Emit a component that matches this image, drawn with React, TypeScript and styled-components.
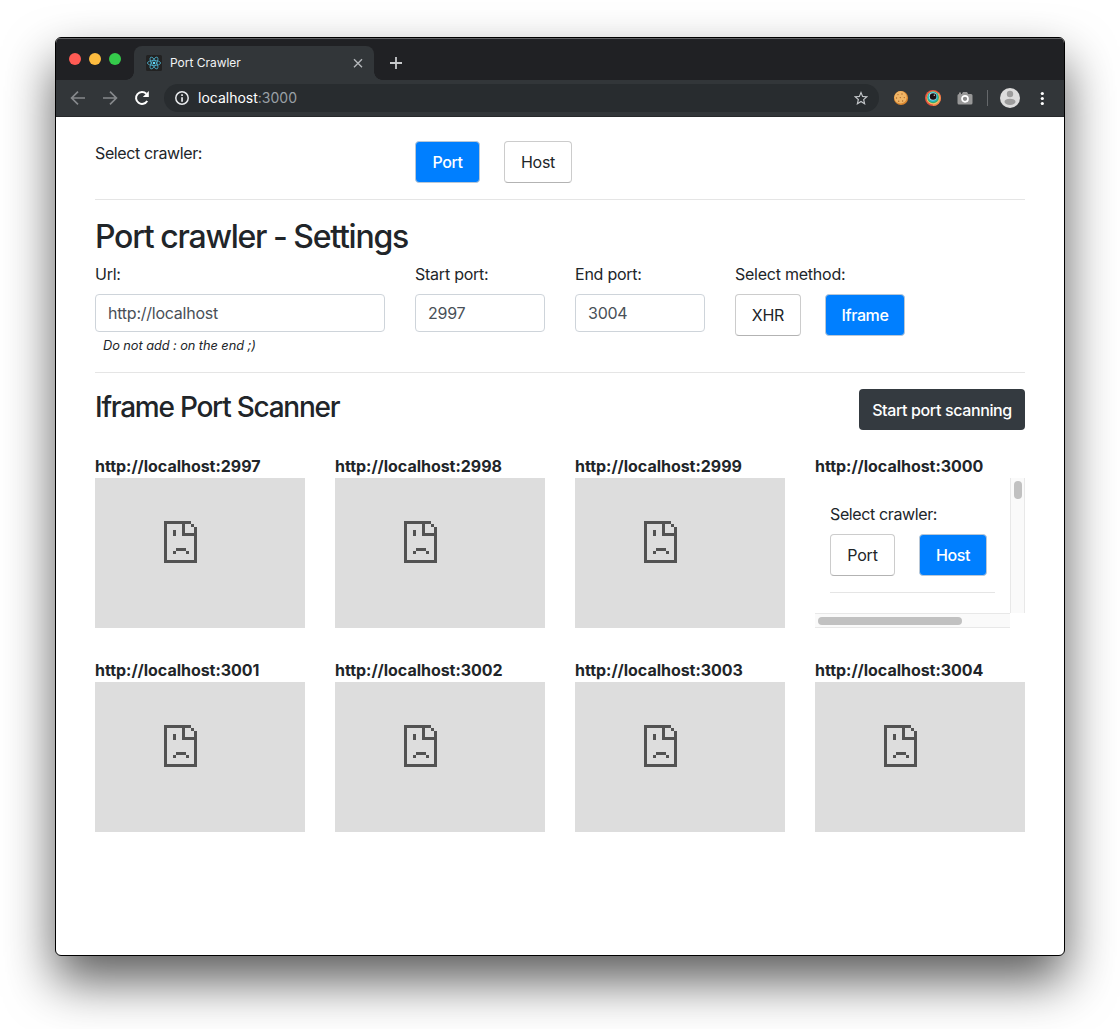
import React from 'react';
import styled, { createGlobalStyle, css } from 'styled-components';

const GlobalStyle = createGlobalStyle`
  *, *::before, *::after { box-sizing: border-box; }
  body {
    margin: 0;
    background: #fff;
    color: #212529;
    font: 400 16px/24px Inter, "Liberation Sans", sans-serif;
    letter-spacing: -0.24px;
  }
`;

const Desktop = styled.div`
  height: 1029px;
  padding: 37px 55px 73px;
  overflow: hidden;
`;

const Window = styled.div`
  display: flex;
  flex-direction: column;
  width: 1010px;
  height: 919px;
  border: 1px solid #000;
  border-radius: 6px;
  background: #fff;
  box-shadow: 0 25px 50px rgba(0, 0, 0, 0.64);
  overflow: hidden;
`;

const TabStrip = styled.div`
  display: flex;
  height: 42px;
  flex: none;
  background: #202124;
  border-top: 1px solid #626365;
`;

const Lights = styled.div`
  display: flex;
  gap: 8px;
  padding: 14px 13px 0;
  width: 78px;
`;

const Light = styled.span<{ $color: string }>`
  width: 12px;
  height: 12px;
  border-radius: 50%;
  background: ${(p) => p.$color};
`;

const Tab = styled.div`
  position: relative;
  display: flex;
  align-items: center;
  width: 240px;
  height: 34px;
  margin-top: 7px;
  padding: 0 10px 0 12px;
  border-radius: 8px 8px 0 0;
  background: #323639;
  color: #f1f3f4;
  font-size: 12px;
  line-height: 16px;
  letter-spacing: -0.02px;

  &::before, &::after {
    content: '';
    position: absolute;
    bottom: 0;
    width: 8px;
    height: 8px;
  }
  &::before {
    left: -8px;
    background: radial-gradient(circle at 0 0, transparent 7.5px, #323639 8px);
  }
  &::after {
    right: -8px;
    background: radial-gradient(circle at 100% 0, transparent 7.5px, #323639 8px);
  }
`;

const TabTitle = styled.span`
  flex: 1;
  padding-left: 8px;
`;

const NewTab = styled.div`
  display: flex;
  align-items: center;
  padding: 7px 0 0 15px;
`;

const Toolbar = styled.div`
  display: flex;
  align-items: center;
  height: 37px;
  flex: none;
  padding: 0 14px 0 12px;
  background: #323639;
  border-bottom: 1px solid #27292b;
`;

const NavButtons = styled.div`
  display: flex;
  gap: 12px;
  width: 96px;
`;

const Omnibox = styled.div`
  display: flex;
  align-items: center;
  width: 715px;
  height: 28px;
  padding: 0 10px;
  border-radius: 14px;
  background: #282c2f;
  color: #9aa0a6;
  font-size: 14px;
  letter-spacing: 0;
`;

const Address = styled.span`
  flex: 1;
  padding-left: 8px;
  b { font-weight: 400; color: #fff; }
`;

const Extensions = styled.div`
  display: flex;
  align-items: center;
  gap: 16px;
  padding-left: 14px;
`;

const Divider = styled.span`
  width: 1px;
  height: 16px;
  margin: 0 12px 0 14px;
  background: #65686b;
`;

const Menu = styled.div`
  display: flex;
  padding-left: 14px;
`;

const Page = styled.main`
  flex: 1;
  padding: 24px 39px 0;
`;

const Section = styled.section<{ $height: number }>`
  display: flex;
  height: ${(p) => p.$height}px;
`;

const Column = styled.div<{ $span: number }>`
  flex: none;
  width: ${(p) => p.$span * 80}px;
  padding-right: 30px;
  white-space: nowrap;
`;

const Rule = styled.hr`
  margin: 0;
  border: 0;
  border-top: 1px solid #e5e5e5;
`;

const Heading = styled.h2`
  margin: 18px 0 6px;
  font-size: 32px;
  font-weight: 500;
  line-height: 38px;
  letter-spacing: -1.25px;
  word-spacing: -0.5px;
`;

const Subheading = styled.h3`
  margin: 1px 0 0;
  font-size: 28px;
  font-weight: 500;
  line-height: 34px;
  letter-spacing: -1.25px;
`;

const Label = styled.label`
  display: block;
  height: 32px;
`;

const CrawlerLabel = styled.div`
  height: 32px;
  letter-spacing: -0.38px;
`;

const Input = styled.input`
  display: block;
  width: 100%;
  height: 38px;
  padding: 0 12px;
  border: 1px solid #ced4da;
  border-radius: 4px;
  background: #fff;
  color: #495057;
  font: inherit;
  letter-spacing: inherit;
`;

const Hint = styled.small`
  display: block;
  padding: 4px 8px;
  font-size: 12.8px;
  font-style: italic;
  line-height: 20px;
  letter-spacing: -0.06px;
`;

const ButtonGroup = styled.div`
  display: flex;
  gap: 24px;
`;

const Toggle = styled.button<{ $width: number; $active?: boolean }>`
  width: ${(p) => p.$width}px;
  height: 42px;
  padding: 0;
  border: 1px solid #ccc;
  border-bottom-color: #b3b3b3;
  border-radius: 4px;
  background: #fff;
  color: #212529;
  font: inherit;
  letter-spacing: inherit;
  ${(p) => p.$active && css`
    border-color: #b9c7d6;
    background: #007fff;
    color: #fff;
    font-weight: 500;
    letter-spacing: -0.4px;
  `}
`;

const ScannerHead = styled.div`
  display: flex;
  justify-content: space-between;
  height: 65px;
`;

const ScanButton = styled.button`
  width: 166px;
  height: 41px;
  padding: 0;
  border: 0;
  border-radius: 4px;
  background: #343a40;
  color: #fff;
  font: inherit;
  font-weight: 500;
  letter-spacing: -0.37px;
`;

const Grid = styled.div`
  display: grid;
  grid-template-columns: repeat(4, 210px);
  gap: 30px;
`;

const Target = styled.h4`
  margin: 0;
  font-size: 16px;
  font-weight: 700;
  line-height: 24px;
  letter-spacing: -0.03px;
`;

const DeadFrame = styled.div`
  height: 150px;
  padding: 43px 0 0 69px;
  background: #ddd;
  svg { display: block; }
`;

const LiveFrame = styled.div`
  display: grid;
  grid-template: 135px 15px / 195px 15px;
  height: 150px;
`;

const FrameBody = styled.div`
  padding: 24px 15px 0;
`;

const FrameRule = styled(Rule)`
  margin-top: 16px;
`;

const VerticalTrack = styled.div`
  padding: 3px 2px 0 3px;
  border: solid #e8e8e8;
  border-width: 0 1px;
  background: #fafafa;
`;

const HorizontalTrack = styled.div`
  padding: 3px 0 0 3px;
  border: solid #e8e8e8;
  border-width: 1px 0;
  background: #fafafa;
`;

const Thumb = styled.div<{ $w: number; $h: number }>`
  width: ${(p) => p.$w}px;
  height: ${(p) => p.$h}px;
  border-radius: 4px;
  background: #c1c1c1;
`;

const ReactMark = () => (
  <svg width="16" height="16" viewBox="0 0 16 16">
    <rect width="16" height="16" rx="1.5" fill="#222" />
    <g fill="none" stroke="#4fb3cf" strokeWidth="0.8">
      <ellipse cx="8" cy="8" rx="6.6" ry="2.5" />
      <ellipse cx="8" cy="8" rx="6.6" ry="2.5" transform="rotate(60 8 8)" />
      <ellipse cx="8" cy="8" rx="6.6" ry="2.5" transform="rotate(120 8 8)" />
    </g>
    <circle cx="8" cy="8" r="1.3" fill="#61dafb" />
  </svg>
);

const CloseIcon = () => (
  <svg width="12" height="12" viewBox="0 0 12 12" stroke="#b4b7ba" strokeWidth="1.4">
    <path d="M2 2.2l8 8M10 2.2l-8 8" />
  </svg>
);

const PlusIcon = () => (
  <svg width="14" height="14" viewBox="0 0 14 14" stroke="#c8cacc" strokeWidth="1.8">
    <path d="M7 1v12M1 7h12" />
  </svg>
);

const ArrowIcon = ({ forward }: { forward?: boolean }) => (
  <svg width="20" height="20" viewBox="0 0 20 20" fill="none" stroke="#85888b" strokeWidth="1.7">
    <path d={forward ? 'M3 10h13M10 3.6l6.4 6.4-6.4 6.4' : 'M17 10H4M10 3.6L3.6 10l6.4 6.4'} />
  </svg>
);

const ReloadIcon = () => (
  <svg width="20" height="20" viewBox="0 0 20 20">
    <path d="M15.2 13a6 6 0 1 1-.9-7.3" fill="none" stroke="#fff" strokeWidth="2" />
    <path d="M16.8 3v6h-6z" fill="#fff" />
  </svg>
);

const InfoIcon = () => (
  <svg width="16" height="16" viewBox="0 0 16 16">
    <circle cx="8" cy="8" r="6.2" fill="none" stroke="#e8eaed" strokeWidth="1.5" />
    <path d="M7.2 4.3h1.7v1.7H7.2zM7.2 7.2h1.7v4.5H7.2z" fill="#e8eaed" />
  </svg>
);

const StarIcon = () => (
  <svg width="16" height="16" viewBox="1 0.5 22 22" fill="#c3c6c9">
    <path d="M22 9.24l-7.19-.62L12 2 9.19 8.63 2 9.24l5.46 4.73L5.82 21 12 17.27 18.18 21l-1.63-7.03L22 9.24zM12 15.4l-3.76 2.27 1-4.28-3.32-2.88 4.38-.38L12 6.1l1.71 4.04 4.38.38-3.32 2.88 1 4.28L12 15.4z" />
  </svg>
);

const CookieIcon = () => (
  <svg width="16" height="16" viewBox="0 0 16 16">
    <circle cx="8" cy="8" r="7.1" fill="#d9862f" />
    <circle cx="7.5" cy="7.3" r="6.2" fill="#f0b565" />
    <g fill="#a8662a">
      <circle cx="5" cy="4.6" r="0.6" />
      <circle cx="9" cy="4" r="0.7" />
      <circle cx="3.5" cy="8" r="0.7" />
      <circle cx="7.3" cy="7.6" r="0.7" />
      <circle cx="11.3" cy="7.6" r="0.7" />
      <circle cx="5.7" cy="11.3" r="0.7" />
      <circle cx="9.6" cy="11" r="0.7" />
    </g>
  </svg>
);

const EyeIcon = () => (
  <svg width="16" height="16" viewBox="0 0 16 16">
    <circle cx="8" cy="8" r="8" fill="#e8533f" />
    <path d="M8 16a8 8 0 0 0 8-8 8 8 0 0 0-2-5L8 8z" fill="#f0894a" />
    <circle cx="8.2" cy="7.9" r="6.6" fill="#f0c069" />
    <circle cx="8.1" cy="7.4" r="5.8" fill="#39a866" />
    <circle cx="7.9" cy="6.9" r="5.2" fill="#27b5c4" />
    <circle cx="7.8" cy="6.6" r="4" fill="#a9dfe9" />
    <circle cx="8.1" cy="6.5" r="3.3" fill="#1b1013" />
    <circle cx="9.3" cy="5.2" r="0.6" fill="#fff" />
  </svg>
);

const CameraIcon = () => (
  <svg width="16" height="16" viewBox="0 0 16 16">
    <path d="M2 4V2.5h2V4h.8L6 2h4l1.200 2H14a1.500 1.500 0 0 1 1.500 1.500V13a1.500 1.500 0 0 1-1.500 1.500H2A1.500 1.500 0 0 1 .5 13V5.500A1.500 1.500 0 0 1 2 4z" fill="#989898" />
    <circle cx="8" cy="8.8" r="3" fill="#8a8a8a" stroke="#fff" strokeWidth="1.7" />
  </svg>
);

const AvatarIcon = () => (
  <svg width="20" height="20" viewBox="0 0 20 20">
    <circle cx="10" cy="10" r="10" fill="#dcdcdc" />
    <circle cx="10" cy="6" r="3.2" fill="#9c9c9c" />
    <ellipse cx="10" cy="13.8" rx="5.5" ry="3.1" fill="#9c9c9c" />
  </svg>
);

const DotsIcon = () => (
  <svg width="16" height="16" viewBox="0 0 16 16" fill="#fff">
    <circle cx="8.3" cy="3.5" r="1.6" />
    <circle cx="8.3" cy="8.5" r="1.6" />
    <circle cx="8.3" cy="13.5" r="1.6" />
  </svg>
);

const SadPage = () => (
  <svg width="33" height="42" viewBox="0 0 33 42" fill="#525252" shapeRendering="crispEdges">
    <path d="M0 0h27v3h3v3h3v36H0zM3 3v36h27V15H18V3zM21 3v9h9V6h-3V3z" fillRule="evenodd" />
    <path d="M9 9h3v6H9zM12 27h10v3H12zM9 30h3v3H9zM22 30h3v3h-3z" />
  </svg>
);

const ports = [2997, 2998, 2999, 3000, 3001, 3002, 3003, 3004];
const alivePort = 3000;

const EmbeddedCrawler = () => (
  <LiveFrame>
    <FrameBody>
      <CrawlerLabel>Select crawler:</CrawlerLabel>
      <ButtonGroup>
        <Toggle $width={65}>Port</Toggle>
        <Toggle $width={68} $active>Host</Toggle>
      </ButtonGroup>
      <FrameRule />
    </FrameBody>
    <VerticalTrack><Thumb $w={8} $h={18} /></VerticalTrack>
    <HorizontalTrack><Thumb $w={144} $h={8} /></HorizontalTrack>
  </LiveFrame>
);

export default function App() {
  return (
    <Desktop>
      <GlobalStyle />
      <Window>
        <TabStrip>
          <Lights>
            <Light $color="#ff5b54" />
            <Light $color="#fdbc3f" />
            <Light $color="#35cb4b" />
          </Lights>
          <Tab>
            <ReactMark />
            <TabTitle>Port Crawler</TabTitle>
            <CloseIcon />
          </Tab>
          <NewTab><PlusIcon /></NewTab>
        </TabStrip>
        <Toolbar>
          <NavButtons>
            <ArrowIcon />
            <ArrowIcon forward />
            <ReloadIcon />
          </NavButtons>
          <Omnibox>
            <InfoIcon />
            <Address><b>localhost</b>:3000</Address>
            <StarIcon />
          </Omnibox>
          <Extensions>
            <CookieIcon />
            <EyeIcon />
            <CameraIcon />
          </Extensions>
          <Divider />
          <AvatarIcon />
          <Menu><DotsIcon /></Menu>
        </Toolbar>
        <Page>
          <Section $height={58}>
            <Column $span={4}><CrawlerLabel>Select crawler:</CrawlerLabel></Column>
            <ButtonGroup>
              <Toggle $width={65} $active>Port</Toggle>
              <Toggle $width={68}>Host</Toggle>
            </ButtonGroup>
          </Section>
          <Rule />
          <Heading>Port crawler - Settings</Heading>
          <Section $height={110}>
            <Column $span={4}>
              <Label>Url:</Label>
              <Input defaultValue="http://localhost" />
              <Hint>Do not add : on the end ;)</Hint>
            </Column>
            <Column $span={2}>
              <Label>Start port:</Label>
              <Input defaultValue="2997" />
            </Column>
            <Column $span={2}>
              <Label>End port:</Label>
              <Input defaultValue="3004" />
            </Column>
            <Column $span={3}>
              <Label>Select method:</Label>
              <ButtonGroup>
                <Toggle $width={66}>XHR</Toggle>
                <Toggle $width={80} $active>Iframe</Toggle>
              </ButtonGroup>
            </Column>
          </Section>
          <Rule />
          <Section $height={16} />
          <ScannerHead>
            <Subheading>Iframe Port Scanner</Subheading>
            <ScanButton>Start port scanning</ScanButton>
          </ScannerHead>
          <Grid>
            {ports.map((port) => (
              <div key={port}>
                <Target>http://localhost:{port}</Target>
                {port === alivePort ? <EmbeddedCrawler /> : <DeadFrame><SadPage /></DeadFrame>}
              </div>
            ))}
          </Grid>
        </Page>
      </Window>
    </Desktop>
  );
}
